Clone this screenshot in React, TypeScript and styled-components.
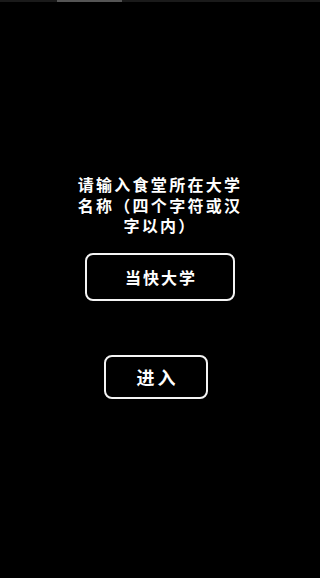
import React from "react";
import styled, { createGlobalStyle } from "styled-components";

const Global = createGlobalStyle`
  html, body {
    margin: 0;
    padding: 0;
    background: #000;
  }
  body {
    font-family: "Noto Sans CJK SC", "Noto Sans", sans-serif;
    color: #fff;
  }
`;

const Page = styled.div`
  width: 320px;
  height: 578px;
  background: #000;
  display: flex;
  flex-direction: column;
  overflow: hidden;
`;

const TopBar = styled.div`
  height: 2px;
  background: #1a1a1a;
  display: flex;
`;

const TopThumb = styled.div`
  margin-left: 57px;
  width: 65px;
  background: #555;
`;

const Content = styled.div`
  display: flex;
  flex-direction: column;
  align-items: center;
  padding-top: 172px;
`;

const Title = styled.div`
  max-width: 172px;
  font-size: 16px;
  font-weight: 700;
  letter-spacing: 2.3px;
  line-height: 20.5px;
  text-align: center;
  color: #fff;
`;

const Box = styled.div<{ $w: number; $h: number; $mt: number; $fs: number; $ls: number; $shift?: number }>`
  box-sizing: border-box;
  width: ${(p) => p.$w}px;
  height: ${(p) => p.$h}px;
  margin-top: ${(p) => p.$mt}px;
  margin-right: ${(p) => (p.$shift ?? 0) * 2}px;
  border: 2px solid #f4f4f4;
  border-radius: 8px;
  display: flex;
  align-items: center;
  justify-content: center;
  font-size: ${(p) => p.$fs}px;
  font-weight: 700;
  letter-spacing: ${(p) => p.$ls}px;
  padding-left: ${(p) => p.$ls}px;
  color: #fff;
`;

export default function App() {
  return (
    <>
      <Global />
      <Page>
        <TopBar>
          <TopThumb />
        </TopBar>
        <Content>
          <Title>请输入食堂所在大学名称（四个字符或汉字以内）</Title>
          <Box $w={150} $h={48} $mt={17} $fs={16} $ls={2}>
            当快大学
          </Box>
          <Box $w={104} $h={44} $mt={54} $fs={18} $ls={3} $shift={4}>
            进入
          </Box>
        </Content>
      </Page>
    </>
  );
}
